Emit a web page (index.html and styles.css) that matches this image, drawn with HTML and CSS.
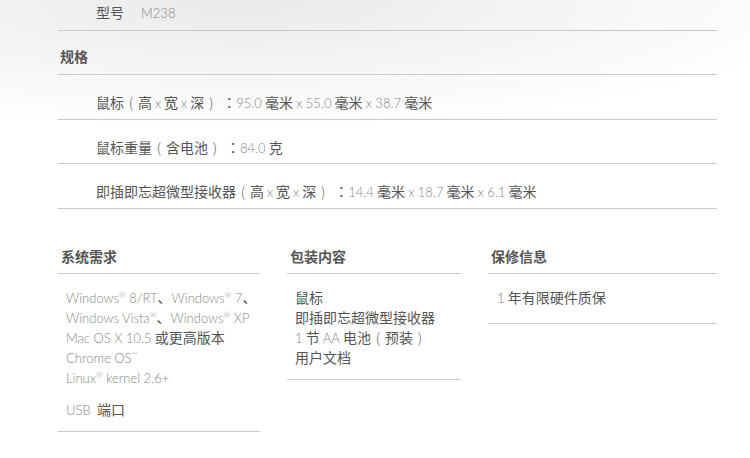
FILE: index.html
```html
<!DOCTYPE html>
<html lang="zh-CN">
<head>
  <meta charset="UTF-8" />
  <meta name="viewport" content="width=device-width, initial-scale=1.0" />
  <title>M238 规格</title>
  <link rel="stylesheet" href="styles.css">
</head>
<body>
  <div class="specs">
    <div class="model-row">型号<span class="en model-no">M238</span></div>

    <h2 class="spec-title">规格</h2>
    <div class="spec-row">鼠标<span class="br">(</span>高<span class="en x">x</span>宽<span class="en x">x</span>深<span class="br">)</span><span class="colon">：</span><span class="en">95.0</span> 毫米 <span class="en">x 55.0</span> 毫米 <span class="en">x 38.7</span> 毫米</div>
    <div class="spec-row">鼠标重量<span class="br">(</span>含电池<span class="br">)</span><span class="colon">：</span><span class="en">84.0</span> 克</div>
    <div class="spec-row">即插即忘超微型接收器<span class="br">(</span>高<span class="en x">x</span>宽<span class="en x">x</span>深<span class="br">)</span><span class="colon">：</span><span class="en">14.4</span> 毫米 <span class="en">x 18.7</span> 毫米 <span class="en">x 6.1</span> 毫米</div>

    <div class="info-grid">
      <div class="info-col">
        <h3 class="info-title">系统需求</h3>
        <div class="info-body">
          <p><span class="en">Windows<sup>®</sup> 8/RT</span>、<span class="en">Windows<sup>®</sup> 7</span>、<br>
          <span class="en">Windows Vista<sup>®</sup></span>、<span class="en">Windows<sup>®</sup> XP</span><br>
          <span class="en">Mac OS X 10.5</span> 或更高版本<br>
          <span class="en">Chrome OS<sup>™</sup></span><br>
          <span class="en">Linux<sup>®</sup> kernel 2.6+</span></p>
          <p class="gap"><span class="en">USB</span>&nbsp; 端口</p>
        </div>
      </div>
      <div class="info-col">
        <h3 class="info-title">包装内容</h3>
        <div class="info-body">
          <p>鼠标<br>
          即插即忘超微型接收器<br>
          <span class="en">1</span> 节 <span class="en">AA</span> 电池<span class="br">(</span>预装<span class="br">)</span><br>
          用户文档</p>
        </div>
      </div>
      <div class="info-col">
        <h3 class="info-title">保修信息</h3>
        <div class="info-body warranty">
          <p><span class="en">1</span> 年有限硬件质保</p>
        </div>
      </div>
    </div>
  </div>
</body>
</html>
```

FILE: styles.css
```css
* { box-sizing: border-box; }
body {
  margin: 0;
  font-family: "Noto Sans CJK SC", "Noto Sans", sans-serif;
  font-size: 14px;
  color: #555;
  background:
    radial-gradient(ellipse 600px 130px at 240px 0, #e9e9e9, rgba(255,255,255,0) 100%),
    #fff;
  min-height: 100vh;
}
h2, h3, p { margin: 0; }

.en {
  font-family: "Lato", "Liberation Sans", sans-serif; font-weight: 300;
  color: #888; font-size: 13px; line-height: 1;
}
.x { margin: 0 3px; }
sup { font-size: 8px; vertical-align: 5px; line-height: 0; }

/* full-width brackets and colon drawn centred, as in the original */
.br { display: inline-block; width: 14px; text-align: center; font-weight: 300; color: #666; }
.colon { display: inline-block; width: 14px; margin-left: 4px; text-align: center; font-family: "Noto Sans CJK TC", sans-serif; }

.specs { width: 659px; margin-left: 58px; }

.model-row {
  line-height: 20px; padding: 2px 0 8px 38px;
  border-bottom: 1px solid #cacaca;
}
.model-no { margin-left: 17px; }

.spec-title {
  font-size: 14px; font-weight: 700; color: #555;
  line-height: 20px; padding: 15px 0 8px 2px;
  border-bottom: 1px solid #cacaca;
}
.spec-row {
  line-height: 20px; padding: 17px 0 6.5px 38px;
  border-bottom: 1px solid #cacaca;
}

.info-grid {
  display: grid; grid-template-columns: 202px 174px 229px;
  column-gap: 27px; align-items: start;
  margin-top: 37px;
}
.info-title {
  font-size: 14px; font-weight: 700; color: #555;
  line-height: 20px; padding: 0 0 7px 3px;
  border-bottom: 1px solid #cacaca;
}
.info-body {
  line-height: 20px; padding: 13px 0 12px 8px;
  border-bottom: 1px solid #cacaca;
  white-space: nowrap;
}
.info-body .gap { margin-top: 12px; }
.info-body.warranty { padding-bottom: 16px; padding-left: 9px; }
```
